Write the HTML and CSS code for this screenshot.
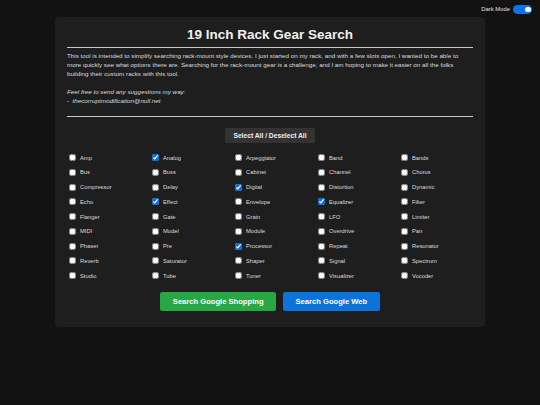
FILE: index.html
```html
<!DOCTYPE html>
<html lang="en">
<head>
<meta charset="utf-8">
<title>19 Inch Rack Gear Search</title>
<link rel="stylesheet" href="styles.css">
</head>
<body>
<div class="topbar">
  <span class="mode-label">Dark Mode</span>
  <span class="toggle"><span class="knob"></span></span>
</div>
<main class="card">
  <h1 class="title">19 Inch Rack Gear Search</h1>
  <div class="rule rule-top"></div>
  <p class="intro">This tool is intended to simplify searching rack-mount style devices. I just started on my rack, and with a few slots open, I wanted to be able to more quickly see what options there are. Searching for the rack-mount gear is a challenge, and I am hoping to make it easier on all the folks building their custom racks with this tool.</p>
  <p class="contact">Feel free to send any suggestions my way:<br>-&nbsp; thecorruptmodification@null.net</p>
  <div class="rule rule-bottom"></div>
  <div class="select-row"><button class="select-btn">Select All / Deselect All</button></div>
  <div class="grid">
    <label class="item"><input type="checkbox">Amp</label>
    <label class="item"><input type="checkbox" checked>Analog</label>
    <label class="item"><input type="checkbox">Arpeggiator</label>
    <label class="item"><input type="checkbox">Band</label>
    <label class="item"><input type="checkbox">Bands</label>
    <label class="item"><input type="checkbox">Bus</label>
    <label class="item"><input type="checkbox">Buss</label>
    <label class="item"><input type="checkbox">Cabinet</label>
    <label class="item"><input type="checkbox">Channel</label>
    <label class="item"><input type="checkbox">Chorus</label>
    <label class="item"><input type="checkbox">Compressor</label>
    <label class="item"><input type="checkbox">Delay</label>
    <label class="item"><input type="checkbox" checked>Digital</label>
    <label class="item"><input type="checkbox">Distortion</label>
    <label class="item"><input type="checkbox">Dynamic</label>
    <label class="item"><input type="checkbox">Echo</label>
    <label class="item"><input type="checkbox" checked>Effect</label>
    <label class="item"><input type="checkbox">Envelope</label>
    <label class="item"><input type="checkbox" checked>Equalizer</label>
    <label class="item"><input type="checkbox">Filter</label>
    <label class="item"><input type="checkbox">Flanger</label>
    <label class="item"><input type="checkbox">Gate</label>
    <label class="item"><input type="checkbox">Grain</label>
    <label class="item"><input type="checkbox">LFO</label>
    <label class="item"><input type="checkbox">Limiter</label>
    <label class="item"><input type="checkbox">MIDI</label>
    <label class="item"><input type="checkbox">Model</label>
    <label class="item"><input type="checkbox">Module</label>
    <label class="item"><input type="checkbox">Overdrive</label>
    <label class="item"><input type="checkbox">Pan</label>
    <label class="item"><input type="checkbox">Phaser</label>
    <label class="item"><input type="checkbox">Pre</label>
    <label class="item"><input type="checkbox" checked>Processor</label>
    <label class="item"><input type="checkbox">Repeat</label>
    <label class="item"><input type="checkbox">Resonator</label>
    <label class="item"><input type="checkbox">Reverb</label>
    <label class="item"><input type="checkbox">Saturator</label>
    <label class="item"><input type="checkbox">Shaper</label>
    <label class="item"><input type="checkbox">Signal</label>
    <label class="item"><input type="checkbox">Spectrum</label>
    <label class="item"><input type="checkbox">Studio</label>
    <label class="item"><input type="checkbox">Tube</label>
    <label class="item"><input type="checkbox">Tuner</label>
    <label class="item"><input type="checkbox">Visualizer</label>
    <label class="item"><input type="checkbox">Vocoder</label>
  </div>
  <div class="actions">
    <button class="action shopping">Search Google Shopping</button>
    <button class="action web">Search Google Web</button>
  </div>
</main>
</body>
</html>
```
FILE: styles.css
```css
* { box-sizing: border-box; }
html, body { margin: 0; padding: 0; }
body {
  background: #121212;
  color: #e0e0e0;
  font-family: "Liberation Sans", Arial, sans-serif;
  width: 540px;
  height: 405px;
  overflow: hidden;
}
.topbar {
  height: 17px;
  display: flex;
  justify-content: flex-end;
  align-items: flex-start;
  padding: 5px 8px 0 0;
  gap: 3px;
}
.mode-label {
  font-size: 5.9px;
  line-height: 8.5px;
  color: #e0e0e0;
}
.toggle {
  width: 19px;
  height: 8.5px;
  border-radius: 5px;
  background: #0a74e8;
  display: flex;
  justify-content: flex-end;
  align-items: center;
  padding-right: 1.5px;
}
.knob {
  width: 5.5px;
  height: 5.5px;
  border-radius: 50%;
  background: #fff;
}
.card {
  width: 430px;
  margin: 0 auto;
  background: #1e1e1e;
  border-radius: 4px;
  padding: 10px 12px 16px;
}
.title {
  margin: 0;
  font-size: 13.5px;
  line-height: 16px;
  font-weight: bold;
  text-align: center;
  color: #f0f0f0;
}
.rule {
  height: 1px;
  background: #c8c8c8;
}
.rule-top { margin-top: 4px; }
.rule-bottom { margin-top: 11px; }
.intro, .contact {
  margin: 0;
  font-size: 6.25px;
  line-height: 9px;
  color: #dcdcdc;
}
.intro { margin-top: 3px; }
.contact { margin-top: 8.7px; font-style: italic; }
.select-row {
  display: flex;
  justify-content: center;
  margin-top: 11.5px;
}
.select-btn {
  font-family: inherit;
  font-size: 6.7px;
  font-weight: bold;
  color: #f0f0f0;
  background: #333333;
  border: none;
  border-radius: 2px;
  height: 15px;
  width: 90px;
  padding: 0;
}
.grid {
  display: grid;
  grid-template-columns: repeat(5, 83px);
  grid-auto-rows: 14.75px;
  margin-top: 7px;
  margin-left: 2px;
  margin-right: -11px;
}
.item {
  display: flex;
  align-items: center;
  font-size: 5.8px;
  color: #dcdcdc;
}
.item input {
  width: 7px;
  height: 7px;
  margin: 0 4px 0 0;
  accent-color: #0b6fe0;
}
.actions {
  display: flex;
  justify-content: center;
  gap: 7px;
  margin-top: 9px;
}
.action {
  font-family: inherit;
  font-size: 7.6px;
  font-weight: bold;
  color: #ffffff;
  border: none;
  border-radius: 2px;
  height: 19px;
  padding: 0 12.5px;
}
.shopping { background: #28a745; }
.web { background: #0a74da; }
```
